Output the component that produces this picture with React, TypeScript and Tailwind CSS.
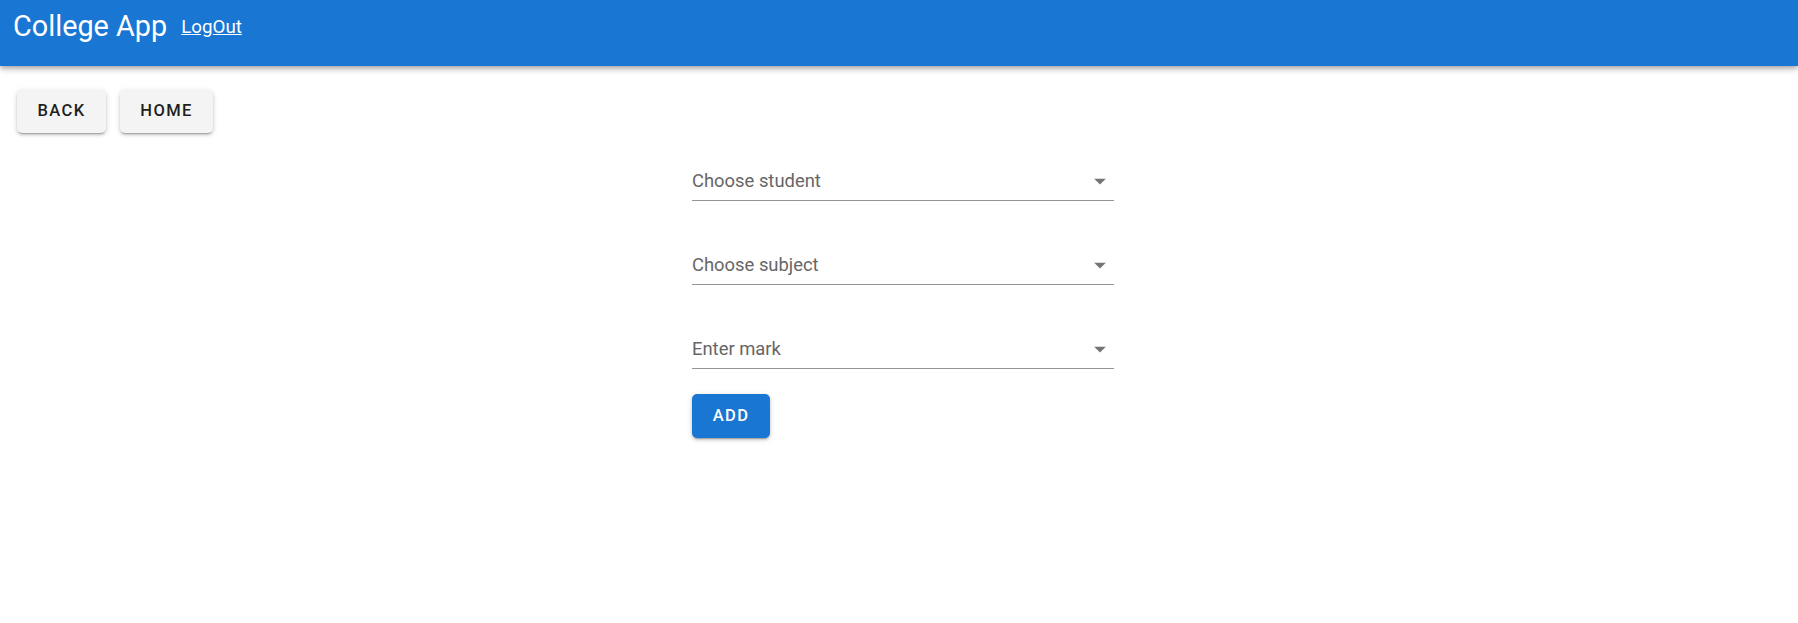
import { useState } from "react";

const fields = ["Choose student", "Choose subject", "Enter mark"];

const DropArrow = () => (
    <svg viewBox="0 0 24 24" className="w-[28px] h-[28px] shrink-0" fill="rgba(0,0,0,0.54)">
        <path d="M7 10l5 5 5-5z" />
    </svg>
);

const SelectField = ({ label }: { label: string }) => {
    return (
        <div className="flex items-center justify-between border-b border-[#949494] pb-[5px] cursor-pointer">
            <span className="text-[18.4px] leading-[24px] text-[#666666]">{label}</span>
            <DropArrow />
        </div>
    );
};

const btnShadow =
    "shadow-[0_3px_1px_-2px_rgba(0,0,0,0.2),0_2px_3px_0_rgba(0,0,0,0.16),0_1px_6px_0_rgba(0,0,0,0.12)]";

const NavButton = ({ children, width }: { children: string; width: string }) => (
    <button
        className={`${width} h-[43px] rounded-[5px] bg-[#f4f4f4] text-[#1f1f1f] text-[16.5px] font-medium tracking-[1.4px] uppercase ${btnShadow}`}
    >
        {children}
    </button>
);

export default function App() {
    const [mark] = useState("");

    return (
        <div className="min-h-screen bg-white font-['Roboto',sans-serif]">
            <header className="h-[66px] bg-[#1976d2] text-white flex items-start px-[13px] shadow-[0_2px_4px_-1px_rgba(0,0,0,0.2),0_4px_5px_0_rgba(0,0,0,0.14),0_1px_10px_0_rgba(0,0,0,0.12)] relative z-10">
                <h1 className="text-[28.8px] leading-[34px] mt-[9px]">College App</h1>
                <a href="#" className="ml-[14px] mt-[15px] text-[18.8px] leading-[24px] underline">
                    LogOut
                </a>
            </header>

            <div className="flex gap-[14px] pl-[17px] pt-[24px]">
                <NavButton width="w-[89px]">Back</NavButton>
                <NavButton width="w-[93px]">Home</NavButton>
            </div>

            <div className="pl-[8px]">
                <div className="w-[422px] mx-auto pt-[34px] flex flex-col">
                    {fields.map((f, i) => (
                        <div key={f} className={i > 0 ? "mt-[50px]" : ""}>
                            <SelectField label={f} />
                        </div>
                    ))}
                    <div className="mt-[25px]">
                        <button
                            data-mark={mark}
                            className={`h-[44px] w-[78px] rounded-[5px] bg-[#1976d2] text-white text-[16.5px] font-medium tracking-[1.4px] uppercase ${btnShadow}`}
                        >
                            Add
                        </button>
                    </div>
                </div>
            </div>
        </div>
    );
}
